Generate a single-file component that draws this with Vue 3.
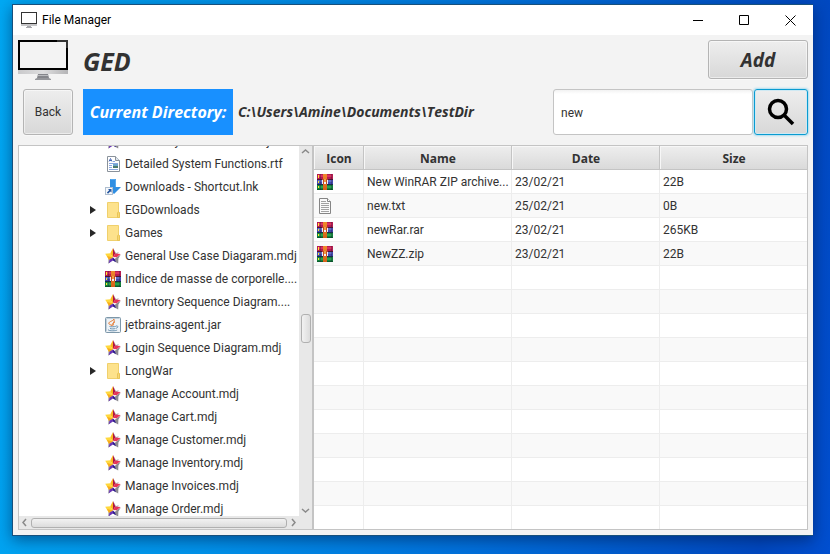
<script setup>
import { ref } from 'vue'

const query = ref('new')

const tree = [
  { name: 'Data Entry Case Model.mdj', icon: 'star' },
  { name: 'Detailed System Functions.rtf', icon: 'rtf' },
  { name: 'Downloads - Shortcut.lnk', icon: 'shortcut' },
  { name: 'EGDownloads', icon: 'folder', branch: true },
  { name: 'Games', icon: 'folder', branch: true },
  { name: 'General Use Case Diagaram.mdj', icon: 'star' },
  { name: 'Indice de masse de corporelle....', icon: 'rar' },
  { name: 'Inevntory Sequence Diagram....', icon: 'star' },
  { name: 'jetbrains-agent.jar', icon: 'jar' },
  { name: 'Login Sequence Diagram.mdj', icon: 'star' },
  { name: 'LongWar', icon: 'folder', branch: true },
  { name: 'Manage Account.mdj', icon: 'star' },
  { name: 'Manage Cart.mdj', icon: 'star' },
  { name: 'Manage Customer.mdj', icon: 'star' },
  { name: 'Manage Inventory.mdj', icon: 'star' },
  { name: 'Manage Invoices.mdj', icon: 'star' },
  { name: 'Manage Order.mdj', icon: 'star' },
]

const files = [
  { icon: 'rar', name: 'New WinRAR ZIP archive...', date: '23/02/21', size: '22B' },
  { icon: 'txt', name: 'new.txt', date: '25/02/21', size: '0B' },
  { icon: 'rar', name: 'newRar.rar', date: '23/02/21', size: '265KB' },
  { icon: 'rar', name: 'NewZZ.zip', date: '23/02/21', size: '22B' },
]
const emptyRows = 11
</script>

<template>
  <svg class="sprite" aria-hidden="true">
    <defs>
      <linearGradient id="chin" x1="0" x2="1" y1="0" y2="0">
        <stop offset="0" stop-color="#c9c9cb" />
        <stop offset="0.5" stop-color="#dededf" />
        <stop offset="1" stop-color="#b4b4b6" />
      </linearGradient>
      <linearGradient id="strap" x1="0" x2="0" y1="0" y2="1">
        <stop offset="0" stop-color="#f08a2c" />
        <stop offset="1" stop-color="#d4601a" />
      </linearGradient>
      <symbol id="monitor" viewBox="0 0 50 41">
        <rect x="0" y="29" width="50" height="5" fill="url(#chin)" />
        <path d="M0 0H50V30H0ZM2 2V28H48V2Z" fill="#000" fill-rule="evenodd" />
        <path d="M39 0H50V8H48V2H39Z" fill="#333" />
        <path d="M20 34H30L31 38H19Z" fill="#85868b" />
        <path d="M20 35H30V36H20Z" fill="#b9babd" />
        <path d="M19 38H31L33 39V40H17V39Z" fill="#96979b" />
      </symbol>
      <symbol id="monitor-small" viewBox="0 0 16 16">
        <path d="M0 0H16V12H0ZM1 1V11H15V1Z" fill="#333" fill-rule="evenodd" />
        <rect x="0" y="12" width="16" height="2" fill="#c6c6c8" />
        <path d="M6 14H10V15H11V16H5V15H6Z" fill="#a6a6aa" />
      </symbol>
      <symbol id="star" viewBox="0 0 16 16">
        <path d="M8 0L11 5L14 4L11 8Z" fill="#b5b5b8" />
        <path d="M12 9L15.8 6.4L13.4 10.6L13.2 15.6L8 12.4Z" fill="#8c8a90" />
        <path d="M3.4 10.5L3 15.8L5 14.6V10Z" fill="#b0aeb4" />
        <path d="M8 0V10L5.2 5.4Z" fill="#fbb822" />
        <path d="M0.2 5.8L5.4 5.2L8 10L3.8 11.6Z" fill="#ffd83c" />
        <path d="M2 8L8 9.5L4 12Z" fill="#f9ab1c" />
        <path d="M8 0L10.4 5.4L8 9Z" fill="#b01540" />
        <path d="M10.4 5.6L15.6 6L11.8 9.2L8 9Z" fill="#e63458" />
        <path d="M8 9.6L4.6 11.4L3.8 15.2L8 12.6Z" fill="#6a34b4" />
        <path d="M8 9.6V12.6L11 14.2L9.6 11Z" fill="#2c1690" />
      </symbol>
      <symbol id="rtf" viewBox="0 0 16 16">
        <path d="M2.5 .5H10.5L14.5 4.5V15.5H2.5Z" fill="#fff" stroke="#8a929b" />
        <path d="M10.5 .5V4.5H14.5" fill="#dce5ed" stroke="#8a929b" />
        <path d="M4 5.5L5.5 2.5L7 5.5M4.5 4.5H6.5" fill="none" stroke="#4a69b8" />
        <path d="M8 5.5H10M4 7.5H13M4 9.5H7M4 11.5H7M4 13.5H13" stroke="#8aa6e0" />
        <rect x="8" y="8" width="5" height="4" fill="#6fa6cc" />
        <rect x="8" y="10" width="5" height="2" fill="#4d7a6c" />
      </symbol>
      <symbol id="shortcut" viewBox="0 0 16 16">
        <path d="M5 0H11V8H16L9 15L3 9L5 8Z" fill="#2f8ee2" />
        <path d="M5.5 .5H10.5V8" fill="none" stroke="#54a8ef" />
        <rect x=".5" y="8.5" width="7" height="7" fill="#f6f8fb" stroke="#aebed0" />
        <path d="M3 10H6.5V13.5L5.3 12.4L3 14.7L1.9 13.6L4.2 11.3Z" fill="#27579f" />
      </symbol>
      <symbol id="folder" viewBox="0 0 16 16">
        <path d="M2.5 .5H13.5V10L14.5 11V15.5H2.5Z" fill="#fde28c" stroke="#f0d06c" />
        <path d="M13.5 9.5L12.5 11V15.5H14.5V11Z" fill="#f8d673" stroke="#e8c558" />
      </symbol>
      <symbol id="rar" viewBox="0 0 16 16">
        <rect width="16" height="5" fill="#b61b50" />
        <path d="M1 1H15V3H1Z" fill="#dc315f" />
        <path d="M0 5H16V6H0Z" fill="#4d1335" />
        <rect y="6" width="16" height="4" fill="#4148ae" />
        <path d="M1 6H15V8H1Z" fill="#5e6bc8" />
        <path d="M0 10H16V11H0Z" fill="#182d4d" />
        <rect y="11" width="16" height="5" fill="#12803a" />
        <path d="M1 12H15V14H1Z" fill="#27a34d" />
        <path d="M0 15H16V16H0Z" fill="#085d2c" />
        <path d="M1 1H2V4H1ZM1 7H2V9H1ZM1 12H2V14H1Z" fill="#ffe72e" />
        <path d="M3 0H4V16H3ZM14 0H15V16H14Z" fill="#271b3d" opacity=".35" />
        <rect x="6" width="4" height="16" fill="url(#strap)" />
        <path d="M5 5H11V10H5Z" fill="#c0482a" />
        <path d="M5 6H6V10H5ZM10 6H11V10H10ZM7 8H9V10H7Z" fill="#f4f0f0" />
        <path d="M7 5H9V8H7Z" fill="#f0a040" />
      </symbol>
      <symbol id="jar" viewBox="0 0 16 16">
        <rect x=".5" y=".5" width="15" height="15" rx="1" fill="#eef3f7" stroke="#7d97a9" />
        <path d="M1.5 14.5V1.5H14.5" fill="none" stroke="#c2d0db" />
        <path d="M8.6 2C10 4-2 5.5 7.4 8.6C6.2 6.8 10.8 5.5 8.6 2M10 4.8C7.6 6 8.2 6.7 8.6 8.3" fill="none" stroke="#e5762c" />
        <path d="M4.5 9.5C5 10 10 9.8 10.8 9.3M5 11.5C6.5 12 9 12 10.4 11.5M3.4 12.6C2 14 10.8 14.2 12.2 13M11 9C14 8.6 13 11 11 11.2" fill="none" stroke="#5b86a6" stroke-width=".9" />
      </symbol>
      <symbol id="txt" viewBox="0 0 16 16">
        <path d="M2.5 .5H10.5L13.5 3.5V15.5H2.5Z" fill="#fafafa" stroke="#858585" />
        <path d="M10.5 .5V3.5H13.5" fill="#fff" stroke="#858585" />
        <path d="M4 3.5H9M4 5.5H12M4 7.5H12M4 9.5H12M4 11.5H12M4 13.5H12" stroke="#a2a2a2" />
      </symbol>
    </defs>
  </svg>

  <div class="desktop">
    <main class="window">
      <header class="titlebar">
        <svg class="icon"><use href="#monitor-small" /></svg>
        <span class="caption">File Manager</span>
        <button class="control" aria-label="Minimize">
          <svg class="glyph" viewBox="0 0 11 11"><path d="M0 5.5H10" /></svg>
        </button>
        <button class="control" aria-label="Maximize">
          <svg class="glyph" viewBox="0 0 11 11"><path d="M.5 .5H9.5V9.5H.5Z" /></svg>
        </button>
        <button class="control" aria-label="Close">
          <svg class="glyph" viewBox="0 0 11 11"><path d="M.5 .5L10.5 10.5M10.5 .5L.5 10.5" /></svg>
        </button>
      </header>

      <section class="brand">
        <svg class="logo"><use href="#monitor" /></svg>
        <h1>GED</h1>
        <button class="btn add">Add</button>
      </section>

      <section class="toolbar">
        <button class="btn back">Back</button>
        <span class="dir-label">Current Directory:</span>
        <span class="dir-path">C:\Users\Amine\Documents\TestDir</span>
        <input v-model="query" class="search" type="text" aria-label="Search files" />
        <button class="btn find" aria-label="Search">
          <svg class="lens" viewBox="0 0 28 28">
            <circle cx="11" cy="11" r="8.5" />
            <path d="M17 17L26 26" />
          </svg>
        </button>
      </section>

      <section class="panes">
        <div class="tree">
          <ul class="tree-list">
            <li v-for="node in tree" :key="node.name" class="node">
              <svg class="arrow" viewBox="0 0 6 8"><path v-if="node.branch" d="M0 0L6 4L0 8Z" /></svg>
              <svg class="icon"><use :href="'#' + node.icon" /></svg>
              <span class="node-name">{{ node.name }}</span>
            </li>
          </ul>
          <div class="vbar">
            <svg class="chev" viewBox="0 0 9 9"><path d="M1 6L4.5 3L8 6" /></svg>
            <span class="gap-above"></span>
            <span class="thumb vthumb"></span>
            <span class="gap-below"></span>
            <svg class="chev" viewBox="0 0 9 9"><path d="M1 3L4.5 6L8 3" /></svg>
          </div>
          <div class="hbar">
            <svg class="chev" viewBox="0 0 9 9"><path d="M6 1L3 4.5L6 8" /></svg>
            <span class="thumb hthumb"></span>
            <svg class="chev" viewBox="0 0 9 9"><path d="M3 1L6 4.5L3 8" /></svg>
          </div>
        </div>

        <div class="listing">
          <table>
            <thead>
              <tr>
                <th class="col-icon">Icon</th>
                <th class="col-mid">Name</th>
                <th class="col-mid">Date</th>
                <th>Size</th>
              </tr>
            </thead>
            <tbody>
              <tr v-for="file in files" :key="file.name">
                <td><svg class="icon"><use :href="'#' + file.icon" /></svg></td>
                <td>{{ file.name }}</td>
                <td>{{ file.date }}</td>
                <td>{{ file.size }}</td>
              </tr>
              <tr v-for="n in emptyRows" :key="n">
                <td></td><td></td><td></td><td></td>
              </tr>
            </tbody>
          </table>
        </div>
      </section>
    </main>
  </div>
</template>

<style>
body {
  margin: 0;
}
</style>

<style scoped>
* {
  box-sizing: border-box;
}
.sprite {
  position: absolute;
  width: 0;
  height: 0;
}
.desktop {
  display: flex;
  height: 100vh;
  padding: 4px 17px 18px 12px;
  background: linear-gradient(97deg, #00a9f4 0%, #0092ea 30%, #0070dc 60%, #0048c0 92%, #004fd0 100%);
  color: #323232;
  font: 12px/16px "Segoe UI", Roboto, "Open Sans", sans-serif;
}
.window {
  display: flex;
  flex: 1;
  flex-direction: column;
  min-width: 0;
  border: 1px solid #17507c;
  border-right-width: 0;
  background: #f3f3f3;
  box-shadow: 0 4px 14px rgba(0, 20, 60, 0.5);
}
button,
input {
  font: inherit;
  color: inherit;
}
.icon {
  display: block;
  flex: none;
  width: 16px;
  height: 16px;
}
.titlebar {
  display: flex;
  flex: none;
  align-items: center;
  height: 30px;
  padding-left: 8px;
  background: #fff;
  color: #000;
}
.caption {
  flex: 1;
  padding-left: 5px;
}
.control {
  display: flex;
  align-items: center;
  justify-content: center;
  width: 46px;
  height: 30px;
  padding: 0;
  border: 0;
  background: none;
}
.glyph {
  width: 11px;
  height: 11px;
  fill: none;
  stroke: #000;
}
.brand {
  display: flex;
  flex: none;
  align-items: flex-start;
  height: 54px;
  padding: 5px 5px 0;
}
.logo {
  width: 50px;
  height: 41px;
}
h1,
th,
.add,
.dir-label,
.dir-path {
  font-family: "Segoe UI", "Open Sans", "Noto Sans", sans-serif;
}
h1 {
  flex: 1;
  margin: 0;
  padding-left: 15px;
  font-size: 25px;
  font-style: italic;
  line-height: 42px;
}
.btn {
  padding: 0;
  border: 1px solid #b4b4b4;
  border-radius: 3px;
  background: linear-gradient(#eeeeee, #d8d8d8);
  box-shadow: inset 0 0 0 1px rgba(255, 255, 255, 0.5), 0 1px 0 #f9f9f9;
}
.add {
  width: 100px;
  height: 39px;
  font-size: 19px;
  font-style: italic;
  font-weight: 700;
}
.toolbar {
  display: flex;
  flex: none;
  align-items: stretch;
  height: 46px;
  padding: 0 5px 0 10px;
}
.back {
  width: 50px;
  margin-right: 10px;
}
.dir-label,
.dir-path {
  font-style: italic;
  font-weight: 700;
  line-height: 46px;
  white-space: nowrap;
}
.dir-label {
  width: 150px;
  background: #1890ff;
  color: #fff;
  font-size: 16px;
  text-align: center;
}
.dir-path {
  flex: 1;
  padding-left: 5px;
  font-size: 14px;
}
.search {
  width: 200px;
  margin-right: 1px;
  padding: 2px 7px 0;
  border: 1px solid #c4c4c4;
  border-radius: 3px;
  outline: 0;
  background: linear-gradient(#f2f2f2, #fff 4px);
}
.find {
  display: flex;
  align-items: center;
  justify-content: center;
  width: 54px;
  border-color: #0a9bd0;
  box-shadow: inset 0 0 0 1px #cfe9f3, 0 0 2px 1px #a9dcef;
}
.lens {
  width: 28px;
  height: 28px;
  fill: none;
  stroke: #000;
  stroke-width: 3.5;
}
.panes {
  display: flex;
  flex: 1;
  min-height: 0;
  padding: 10px 5px 5px;
}
.tree {
  display: grid;
  flex: none;
  grid-template-rows: minmax(0, 1fr) 13px;
  grid-template-columns: minmax(0, 1fr) 13px;
  width: 295px;
  border: 1px solid #c4c4c4;
  background: #e8e8e8;
}
.tree-list {
  display: flex;
  flex-direction: column;
  justify-content: flex-end;
  margin: 0;
  padding: 0;
  overflow: hidden;
  background: #fff;
  list-style: none;
}
.node {
  display: flex;
  flex: none;
  align-items: center;
  height: 23px;
  padding-left: 71px;
}
.node:last-child {
  margin-bottom: -4px;
}
.arrow {
  flex: none;
  width: 6px;
  height: 8px;
  margin-right: 9px;
  fill: #282828;
}
.node-name {
  padding-left: 4px;
  white-space: nowrap;
}
.vbar,
.hbar {
  display: flex;
  align-items: center;
  padding: 1px;
}
.vbar {
  flex-direction: column;
}
.hbar {
  grid-column: 1;
}
.chev {
  flex: none;
  width: 9px;
  height: 9px;
  fill: none;
  stroke: #8a8a8a;
  stroke-width: 1.5;
}
.thumb {
  border: 1px solid #b0b0b0;
  border-radius: 3px;
  background: linear-gradient(#f2f2f2, #dcdcdc);
}
.gap-above {
  flex: 158;
}
.gap-below {
  flex: 163;
}
.vthumb {
  width: 10px;
  height: 29px;
  background: linear-gradient(90deg, #f2f2f2, #dcdcdc);
}
.hthumb {
  flex: 1;
  height: 10px;
  margin: 0 2px;
}
.listing {
  flex: 1;
  min-width: 0;
  overflow: hidden;
  border: 1px solid #c4c4c4;
  background: #fff;
}
table {
  width: 100%;
  border-spacing: 0;
  table-layout: fixed;
}
th {
  height: 24px;
  padding: 2px 0 0 1px;
  border-right: 1px solid #c4c4c4;
  border-bottom: 1px solid #c4c4c4;
  background: linear-gradient(#eeeeee, #dadada);
  box-shadow: inset 1px 1px 0 #f7f7f7;
}
th:last-child,
td:last-child {
  border-right: 0;
}
.col-icon {
  width: 50px;
}
.col-mid {
  width: 148px;
}
td {
  height: 24px;
  padding: 0 0 0 3px;
  overflow: hidden;
  border-right: 1px solid #ededed;
  border-bottom: 1px solid #ededed;
  white-space: nowrap;
}
tbody tr:nth-child(even) {
  background: #f9f9f9;
}
</style>
